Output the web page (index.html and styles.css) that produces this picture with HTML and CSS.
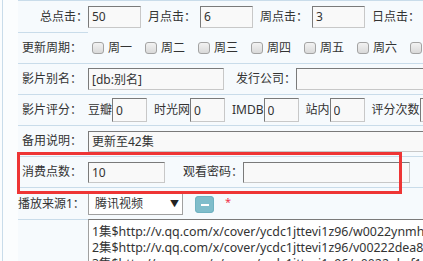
FILE: index.html
```html
<!DOCTYPE html>
<html>
<head>
<meta charset="utf-8">
<link rel="stylesheet" href="styles.css">
</head>
<body>
<div class="frame">
  <div class="form">
    <div class="row r1">
      <div class="lbl right">总点击：</div>
      <div class="val">
        <input class="in clk" value="50"><span class="sub">月点击：</span><input class="in clk" value="6"><span class="sub">周点击：</span><input class="in clk" value="3"><span class="sub">日点击：</span><input class="in clk" value="">
      </div>
    </div>
    <div class="row r2">
      <div class="lbl">更新周期：</div>
      <div class="val nob pad">
        <label class="ck"><span class="box"></span>周一</label>
        <label class="ck"><span class="box"></span>周二</label>
        <label class="ck"><span class="box"></span>周三</label>
        <label class="ck"><span class="box"></span>周四</label>
        <label class="ck"><span class="box"></span>周五</label>
        <label class="ck"><span class="box"></span>周六</label>
        <label class="ck"><span class="box"></span>周日</label>
      </div>
    </div>
    <div class="row r3">
      <div class="lbl">影片别名：</div>
      <div class="val">
        <input class="in alias" value="[db:别名]"><span class="sub wide">发行公司：</span><input class="in long" value="">
      </div>
    </div>
    <div class="row r4">
      <div class="lbl">影片评分：</div>
      <div class="val">
        <span class="tag">豆瓣</span><input class="in sc" value="0"><span class="tag">时光网</span><input class="in sc" value="0"><span class="tag">IMDB</span><input class="in sc" value="0"><span class="tag">站内</span><input class="in sc" value="0"><span class="tag">评分次数</span><input class="in sc" value="">
      </div>
    </div>
    <div class="row r5">
      <div class="lbl">备用说明：</div>
      <div class="val">
        <input class="in note" value="更新至42集">
      </div>
    </div>
    <div class="row r6">
      <div class="lbl">消费点数：</div>
      <div class="val">
        <input class="in pts" value="10"><span class="sub pw">观看密码：</span><input class="in pwd" value="">
      </div>
    </div>
    <div class="row r7">
      <div class="lbl tight">播放来源1：</div>
      <div class="val">
        <div class="sel"><span>腾讯视频</span><span class="arr">▼</span></div>
        <span class="minus"><span class="bar"></span></span>
        <span class="req">*</span>
      </div>
    </div>
    <div class="row r8">
      <div class="lbl"></div>
      <div class="val nob top">
        <div class="ta">1集$http://v.qq.com/x/cover/ycdc1jttevi1z96/w0022ynmh5v.html<br>2集$http://v.qq.com/x/cover/ycdc1jttevi1z96/v00222dea8a.html<br>3集$http://v.qq.com/x/cover/ycdc1jttevi1z96/p0022ukaf1c.html</div>
      </div>
    </div>
  </div>
  <div class="mark"></div>
</div>
</body>
</html>
```

FILE: styles.css
```css
html, body {
  margin: 0;
  padding: 0;
  background: #fbfdfe;
  overflow: hidden;
}
body {
  width: 423px;
  height: 261px;
  font-family: "Noto Sans", "Noto Sans CJK SC", sans-serif;
  font-size: 12px;
  color: #333;
}
.frame {
  position: relative;
  margin-left: 2px;
  border-left: 1px solid #c9dcea;
  padding-left: 15px;
  height: 261px;
}
.form {
  background: #f6fafd;
  width: 600px;
}
.row {
  display: flex;
  height: 31px;
  white-space: nowrap;
}
.r1, .r7 { height: 32px; }
.r8 { height: 60px; }
.lbl {
  width: 70px;
  flex: none;
  box-sizing: border-box;
  padding-left: 4px;
  border-top: 1px solid #c9dcea;
  display: flex;
  align-items: center;
  line-height: 16px;
}
.lbl.right { justify-content: flex-end; padding-left: 0; }
.lbl.tight { padding-left: 0; }
.val {
  flex: 1;
  display: flex;
  align-items: center;
  border-top: 1px solid #c9dcea;
  line-height: 16px;
}
.val.nob { border-top-color: transparent; }
.val.pad { padding-left: 4px; }
.val.top { align-items: flex-start; }
.in {
  box-sizing: border-box;
  height: 22px;
  margin: 0;
  padding: 0 3px;
  font: inherit;
  color: #333;
  background: #f9f9f9;
  border-style: solid;
  border-width: 1px;
  border-color: #7a7a7a #c8c8c8 #c8c8c8 #7a7a7a;
  outline: none;
  flex: none;
}
.clk { width: 53px; }
.sub { margin: 0 4px 0 7px; }
.sub.wide { margin: 0 0 0 12px; }
.sub.pw { margin: 0 0 0 18px; }
.alias { width: 136px; }
.long { width: 200px; }
.sc { width: 35px; height: 24px; margin-right: 7px; }
.note { width: 400px; height: 21px; }
.pts { width: 77px; height: 21px; }
.pwd { width: 167px; height: 21px; }
.ck {
  display: flex;
  align-items: center;
  margin-right: 13px;
}
.box {
  width: 12px;
  height: 12px;
  box-sizing: border-box;
  border: 1px solid #a3a3a3;
  border-radius: 3px;
  background: linear-gradient(#f2f2f2, #d9d9d9);
  margin-right: 4px;
}
.sel {
  box-sizing: border-box;
  width: 95px;
  height: 22px;
  border: 1px solid #a0a0a0;
  background: #fff;
  display: flex;
  align-items: center;
  justify-content: space-between;
  padding: 0 3px 0 6px;
  color: #333;
}
.arr { font-size: 9px; color: #222; }
.minus {
  width: 19px;
  height: 17px;
  margin-left: 12px;
  margin-top: 2px;
  border-radius: 4px;
  background: #7fbdcb;
  box-shadow: inset 0 0 0 1px #70b2c1;
  display: flex;
  align-items: center;
  justify-content: center;
}
.bar {
  width: 8px;
  height: 2px;
  background: #fff;
}
.req {
  color: #f0334a;
  margin-left: 11px;
  font-size: 11px;
  margin-top: -3px;
}
.ta {
  box-sizing: border-box;
  width: 420px;
  height: 60px;
  margin-top: -1px;
  background: #fff;
  border-style: solid;
  border-width: 1px;
  border-color: #7a7a7a #c8c8c8 #c8c8c8 #a0a0a0;
  padding: 4px 3px;
  line-height: 16px;
  font-size: 12.4px;
  color: #333;
}
.mark {
  position: absolute;
  left: 14px;
  top: 152px;
  width: 385px;
  height: 42px;
  box-sizing: border-box;
  border: 3px solid #ee3535;
}
```
